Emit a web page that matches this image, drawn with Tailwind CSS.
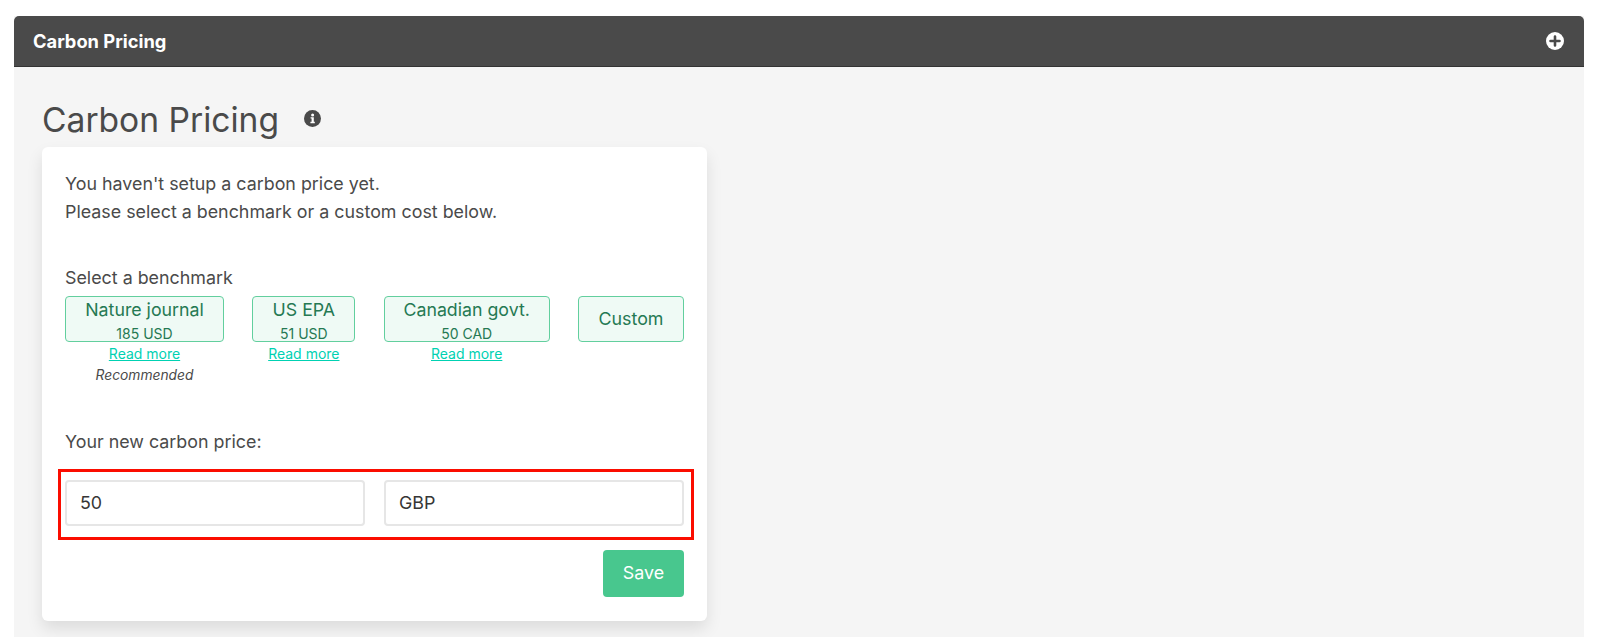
<!DOCTYPE html>
<html lang="en">
<head>
  <meta charset="UTF-8" />
  <title>Carbon Pricing</title>
  <script src="https://cdn.jsdelivr.net/npm/@tailwindcss/browser@4"></script>
</head>
<body class="bg-white font-['Inter',sans-serif] text-[#4a4a4a] overflow-hidden">
  <div class="h-[637px] pt-4 pl-[14px] pr-4">
    <div class="h-[621px] bg-[#f5f5f5]">
      <header class="h-[51px] bg-[#4a4a4a] rounded-t-[5px] border-b border-[#333] flex items-center justify-between pl-[19px] pr-5">
        <h2 class="text-white font-bold text-[18.3px] mt-[2px]">Carbon Pricing</h2>
        <svg class="w-[18px] h-[18px]" viewBox="0 0 18 18"><circle cx="9" cy="9" r="9" fill="#fff"/><path d="M9 4.5v9M4.5 9h9" stroke="#4a4a4a" stroke-width="2.6" stroke-linecap="round"/></svg>
      </header>

      <div class="pl-7 pt-[29px]">
        <div class="flex items-start h-[51px]">
          <h1 class="text-[33.6px] leading-[48px] font-normal">Carbon Pricing</h1>
          <svg class="w-[17px] h-[17px] ml-[25px] mt-[14px]" viewBox="0 0 17 17"><circle cx="8.5" cy="8.5" r="8.5" fill="#4a4a4a"/><circle cx="8.6" cy="4.9" r="1.5" fill="#fff"/><path d="M6.6 7.2h3.2v4.6h1v1.4H6.4v-1.4h1.2V8.6h-1z" fill="#fff"/></svg>
        </div>

        <div class="w-[665px] h-[474px] bg-white rounded-[6px] shadow-[0_8px_16px_rgba(10,10,10,0.1)] pl-[23px] pr-[23px] pt-[23px]">
          <p class="text-[17.85px] leading-[28px]">You haven't setup a carbon price yet.<br />Please select a benchmark or a custom cost below.</p>

          <p class="text-[17.85px] leading-[24px] mt-[40px] mb-[6px]">Select a benchmark</p>
          <div class="flex justify-between h-[108px]">
            <div class="w-[159px] flex flex-col items-center">
              <button class="w-full h-[46px] bg-[#effaf5] text-[#257953] border border-[#62cf9e] rounded-[4px] flex flex-col items-center">
                <span class="text-[17.75px] leading-[24px] mt-[1px]">Nature journal</span>
                <span class="text-[14px] leading-[16px] mt-[4px]">185 USD</span>
              </button>
              <a href="#" class="text-[#00d1b2] underline text-[14px] leading-[18px] mt-[3px]">Read more</a>
              <em class="text-[13.8px] leading-[18px] mt-[3px]">Recommended</em>
            </div>
            <div class="w-[103px] flex flex-col items-center">
              <button class="w-full h-[46px] bg-[#effaf5] text-[#257953] border border-[#62cf9e] rounded-[4px] flex flex-col items-center">
                <span class="text-[17.75px] leading-[24px] mt-[1px]">US EPA</span>
                <span class="text-[14px] leading-[16px] mt-[4px]">51 USD</span>
              </button>
              <a href="#" class="text-[#00d1b2] underline text-[14px] leading-[18px] mt-[3px]">Read more</a>
            </div>
            <div class="w-[166px] flex flex-col items-center">
              <button class="w-full h-[46px] bg-[#effaf5] text-[#257953] border border-[#62cf9e] rounded-[4px] flex flex-col items-center">
                <span class="text-[17.75px] leading-[24px] mt-[1px]">Canadian govt.</span>
                <span class="text-[14px] leading-[16px] mt-[4px]">50 CAD</span>
              </button>
              <a href="#" class="text-[#00d1b2] underline text-[14px] leading-[18px] mt-[3px]">Read more</a>
            </div>
            <button class="w-[106px] h-[46px] bg-[#effaf5] text-[#257953] border border-[#62cf9e] rounded-[4px] text-[17.85px]">Custom</button>
          </div>

          <p class="text-[17.85px] leading-[24px] mt-[26px]">Your new carbon price:</p>

          <div class="relative flex justify-between mt-[26px]">
            <input class="w-[300px] h-[46px] border-2 border-[#e6e6e6] rounded-[4px] px-[13px] pb-[2px] text-[17.85px] text-[#363636]" value="50" />
            <input class="w-[300px] h-[46px] border-2 border-[#e6e6e6] rounded-[4px] px-[13px] pb-[2px] text-[17.85px] text-[#363636]" value="GBP" />
            <div class="absolute -left-[7.5px] -right-[10px] -top-[11px] -bottom-[14px] border-[3px] border-[#fb0d00]"></div>
          </div>

          <div class="flex justify-end mt-[24px]">
            <button class="w-[81px] h-[47px] bg-[#48c78e] text-white rounded-[4px] text-[17.85px]">Save</button>
          </div>
        </div>
      </div>
    </div>
  </div>
</body>
</html>
